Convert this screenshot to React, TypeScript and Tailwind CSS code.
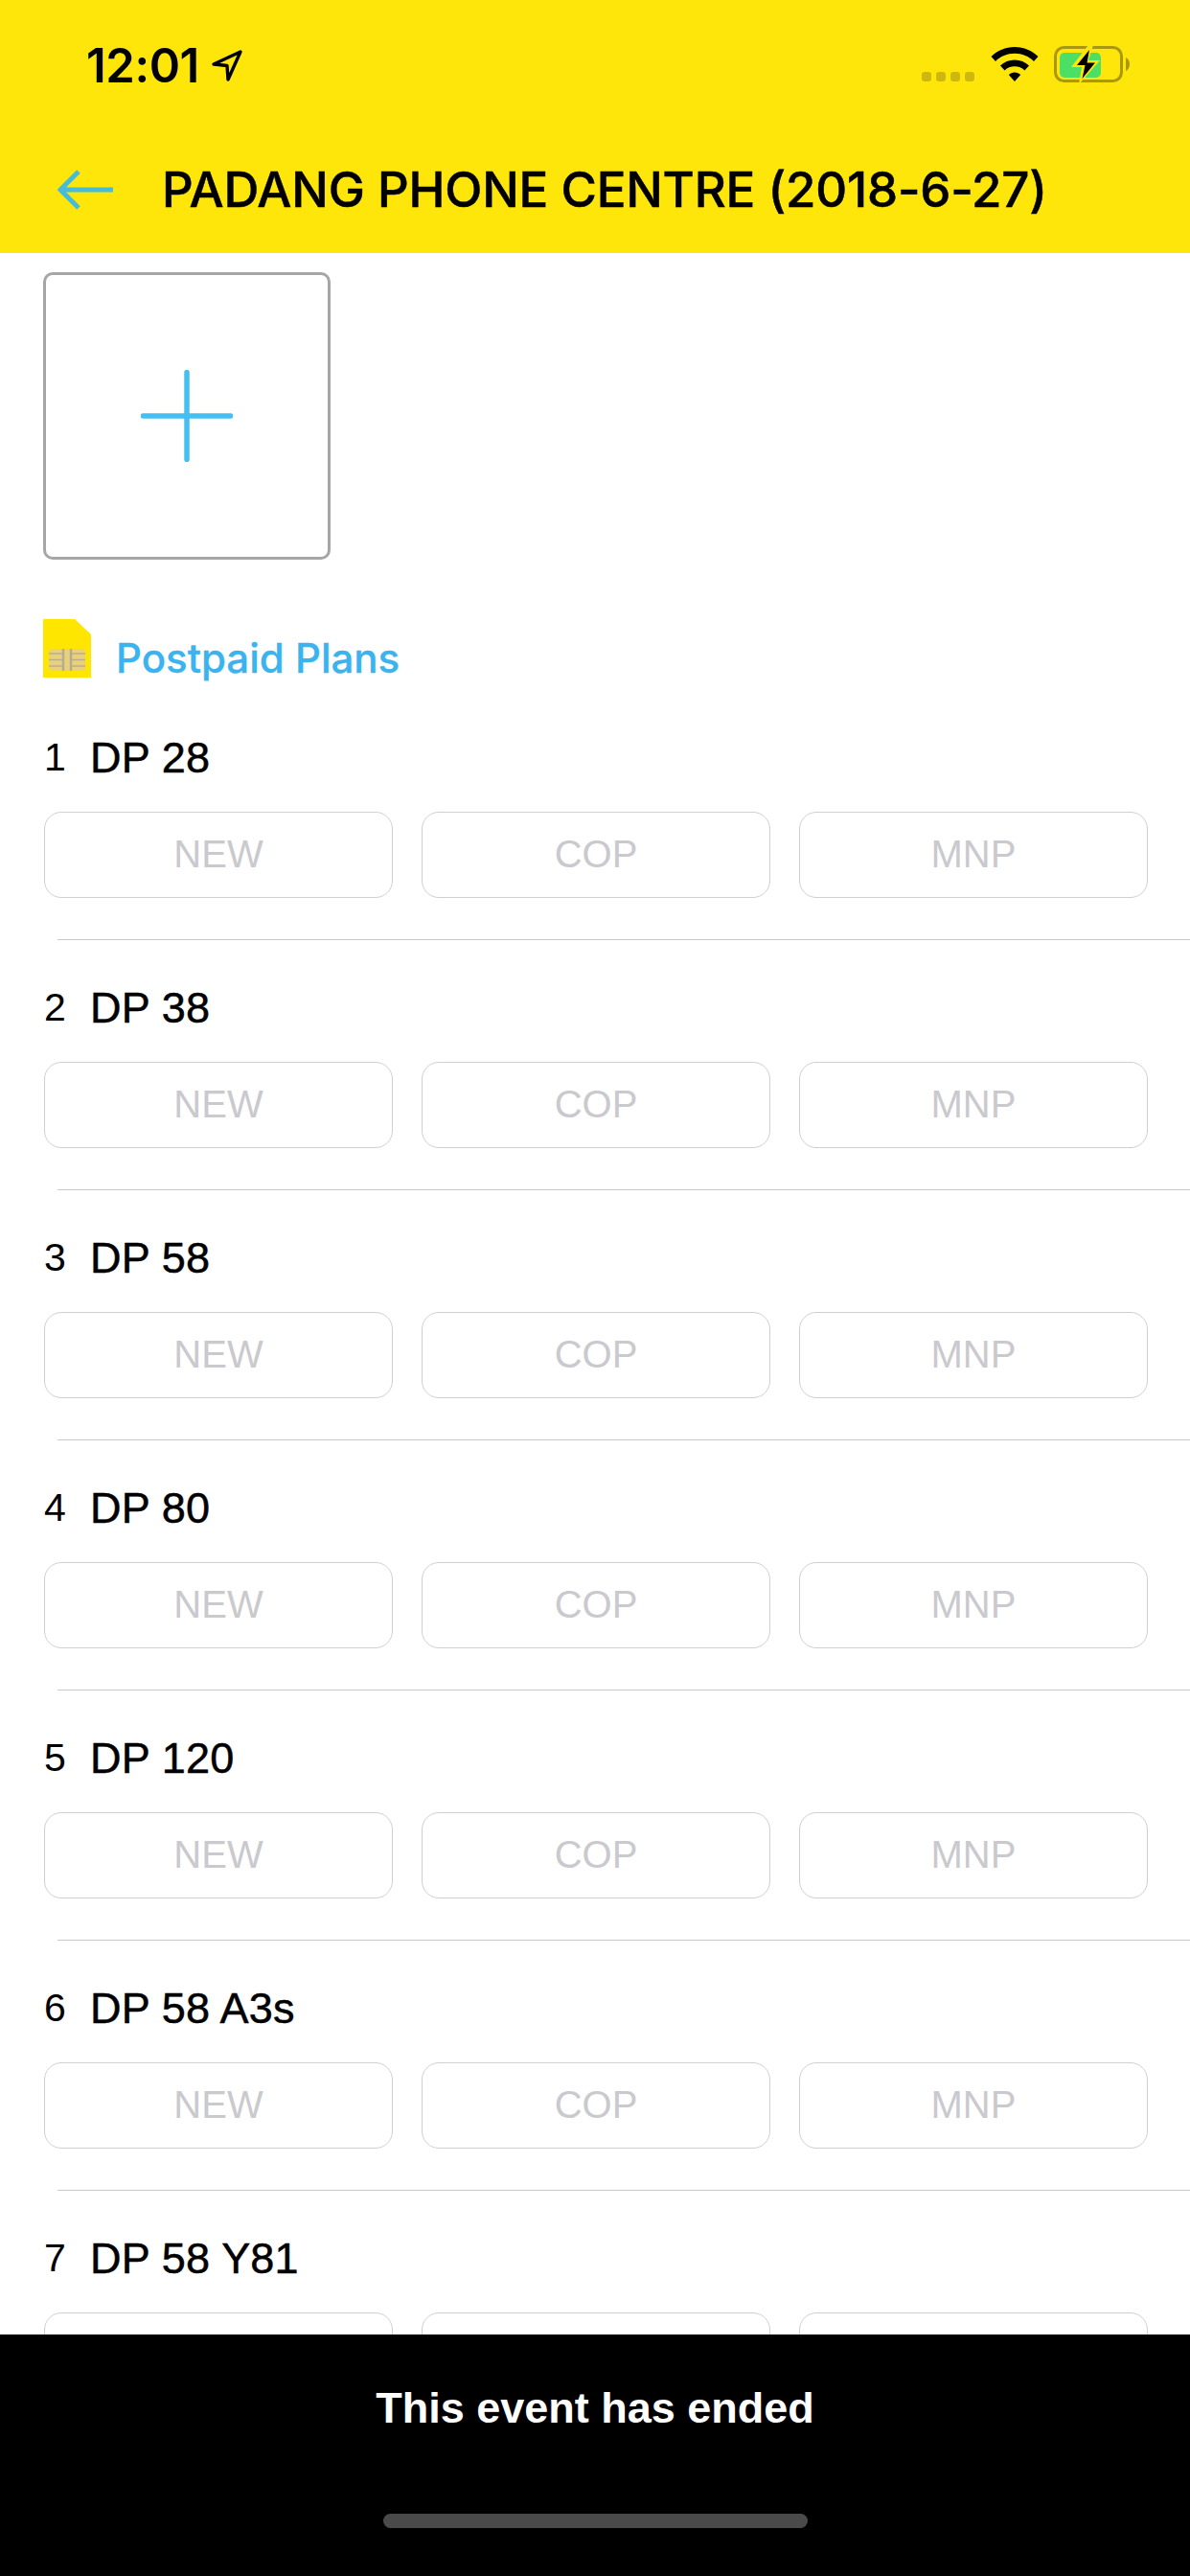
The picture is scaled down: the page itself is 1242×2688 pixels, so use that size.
const plans = ["DP 28", "DP 38", "DP 58", "DP 80", "DP 120", "DP 58 A3s", "DP 58 Y81"];
const kinds = ["NEW", "COP", "MNP"];

function LocationIcon() {
  return (
    <svg width="34" height="36" viewBox="0 0 34 36" fill="none">
      <path d="M31 3 L3 16 L17 17.5 L18 32 Z" stroke="#000" strokeWidth="3.4" strokeLinejoin="round" />
    </svg>
  );
}

function Wifi() {
  return (
    <svg width="50" height="37" viewBox="0 0 50 37" fill="none">
      <path d="M25 0 C15.5 0 7 3.7 0.5 10 L5 15 C10.2 9.8 17.2 6.8 25 6.8 C32.8 6.8 39.8 9.8 45 15 L49.5 10 C43 3.7 34.5 0 25 0 Z" fill="#000" />
      <path d="M25 13.5 C19.2 13.5 14 15.8 10 19.6 L14.6 24.4 C17.4 21.8 21 20.3 25 20.3 C29 20.3 32.6 21.8 35.4 24.4 L40 19.6 C36 15.8 30.8 13.5 25 13.5 Z" fill="#000" />
      <path d="M25 26.5 C22.6 26.5 20.5 27.4 18.8 29 L25 36 L31.2 29 C29.5 27.4 27.4 26.5 25 26.5 Z" fill="#000" />
    </svg>
  );
}

function Battery() {
  return (
    <svg width="80" height="38" viewBox="0 0 80 38" fill="none">
      <rect x="1.5" y="1.5" width="69" height="35" rx="9" stroke="#a89810" strokeWidth="3" />
      <path d="M75 12 C77.5 13 79 16 79 19 C79 22 77.5 25 75 26 Z" fill="#a89810" />
      <rect x="6" y="7" width="43" height="26" rx="5" fill="#4cdf66" />
      <path d="M36 -1 L18 22 L29 22 L26 40 L48 15 L36 15 L41 -1 Z" fill="#ffe60a" />
      <path d="M37 4 L24 20 L32.5 20 L29.5 34 L43 17.5 L34.5 17.5 Z" fill="#000" />
    </svg>
  );
}

function SimIcon() {
  return (
    <svg width="50" height="61" viewBox="0 0 50 61" fill="none">
      <path d="M1 0 H33 L50 16 V61 H0 V1 Z" fill="#ffe600" />
      <rect x="6" y="31" width="38" height="23" rx="4" fill="#e8d07c" />
      <path d="M6 36 H21 M6 42.5 H21 M6 49 H21 M29 36 H44 M29 42.5 H44 M29 49 H44" stroke="#b9b08a" strokeWidth="1.6" />
      <path d="M21 31 V54 M29 31 V54" stroke="#b3ab92" strokeWidth="2.4" />
    </svg>
  );
}

function Plan({ index, name, covered }: { index: number; name: string; covered: boolean }) {
  return (
    <div className="h-[261px] shrink-0 flex flex-col">
      <div className="h-[52px] pl-[46px] flex items-center font-['Liberation_Sans',sans-serif] text-black">
        <span className="w-[48px] text-[41px]">{index}</span>
        <span className="text-[45px] tracking-[0.2px] [-webkit-text-stroke:0.5px_#000]">{name}</span>
      </div>
      <div className="mt-[30px] pl-[46px] flex gap-[30px]">
        {kinds.map((k) => (
          <div
            key={k}
            className="w-[364px] h-[90px] pb-[3px] rounded-[18px] border border-[#cfcfd3] flex items-center justify-center text-[40px] text-[#c9c9ce] font-['Liberation_Sans',sans-serif]"
          >
            {covered ? null : k}
          </div>
        ))}
      </div>
      <div className="mt-[43px] ml-[60px] h-px bg-[#c8c8ce]" />
    </div>
  );
}

export default function App() {
  return (
    <div className="w-[1242px] h-[2688px] flex flex-col overflow-hidden bg-white">
      <header className="h-[264px] shrink-0 bg-[#ffe60a] flex flex-col">
        <div className="h-[132px] flex pl-[90px] pr-[62px] pt-[42px] items-start">
          <span className="text-[49px] leading-[54px] font-semibold tracking-[-0.4px] font-['Inter',sans-serif] text-black">12:01</span>
          <span className="ml-[12px] mt-[9px] flex"><LocationIcon /></span>
          <div className="ml-auto flex items-start">
            <div className="mt-[33px] flex gap-[5px]">
              <span className="w-[10px] h-[10px] rounded-[3px] bg-[#cfb80e]" />
              <span className="w-[10px] h-[10px] rounded-[3px] bg-[#cfb80e]" />
              <span className="w-[10px] h-[10px] rounded-[3px] bg-[#cfb80e]" />
              <span className="w-[10px] h-[10px] rounded-[3px] bg-[#cfb80e]" />
            </div>
            <span className="ml-[17px] mt-[7px] flex"><Wifi /></span>
            <span className="ml-[16px] mt-[6px] flex"><Battery /></span>
          </div>
        </div>
        <div className="flex-1 flex items-start pl-[60px] pt-[45px]">
          <svg width="58" height="42" viewBox="0 0 58 42" fill="none">
            <path d="M22 2 L3 21 L22 40 M3 21 H58" stroke="#46bcd8" strokeWidth="5" />
          </svg>
          <h1 className="ml-[51px] -mt-[6px] text-[51px] leading-[54px] font-medium tracking-[-0.2px] [-webkit-text-stroke:0.5px_#000] font-['Inter',sans-serif] text-black whitespace-nowrap">
            PADANG PHONE CENTRE (2018-6-27)
          </h1>
        </div>
      </header>

      <main className="flex-1 min-h-0 overflow-hidden">
        <div className="mt-[20px] ml-[45px] w-[300px] h-[300px] rounded-[10px] border-[3px] border-[#a6a6a6] flex items-center justify-center">
          <svg width="96" height="96" viewBox="0 0 96 96" fill="none">
            <path d="M48 2.5 V93.5 M2.5 48 H93.5" stroke="#44bff0" strokeWidth="5.5" strokeLinecap="round" />
          </svg>
        </div>
        <div className="mt-[62px] pl-[45px] flex items-start">
          <SimIcon />
          <span className="ml-[26px] mt-[16px] text-[42px] leading-[50px] font-medium [-webkit-text-stroke:0.3px_#3ab3ef] font-['Inter',sans-serif] text-[#3ab3ef]">Postpaid Plans</span>
        </div>
        <div className="mt-[53px] flex flex-col">
          {plans.map((p, i) => (
            <Plan key={p} index={i + 1} name={p} covered={i === plans.length - 1} />
          ))}
        </div>
      </main>

      <footer className="h-[252px] shrink-0 bg-black flex flex-col items-center">
        <p className="mt-[51px] text-[45px] leading-[52px] font-bold text-white font-['Liberation_Sans',sans-serif]">This event has ended</p>
        <div className="mt-[84px] w-[443px] h-[15px] rounded-full bg-[#4a4a4a]" />
      </footer>
    </div>
  );
}
